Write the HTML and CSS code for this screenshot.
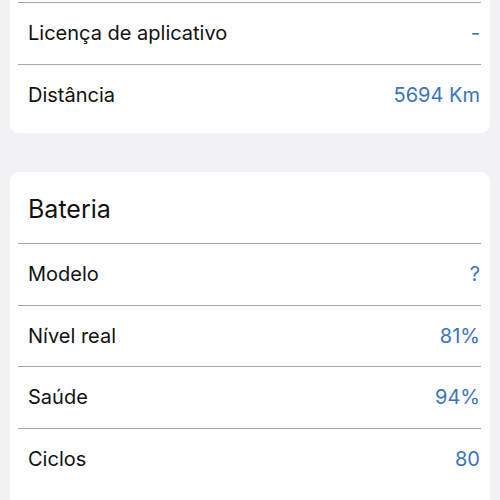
FILE: index.html
```html
<!DOCTYPE html>
<html lang="pt">
<head>
    <meta charset="UTF-8">
    <meta name="viewport" content="width=device-width, initial-scale=1.0">
    <title>Informações</title>
    <link rel="stylesheet" href="styles.css">
</head>
<body>

    <div class="screen">

        <!-- Device card (scrolled, top is cut off) -->
        <div class="card card-top">
            <div class="row">
                <span class="label">Licença de aplicativo</span>
                <span class="value">-</span>
            </div>
            <div class="row">
                <span class="label">Distância</span>
                <span class="value">5694 Km</span>
            </div>
        </div>

        <!-- Battery card -->
        <div class="card card-last">
            <h2 class="card-title">Bateria</h2>
            <div class="row">
                <span class="label">Modelo</span>
                <span class="value">?</span>
            </div>
            <div class="row">
                <span class="label">Nível real</span>
                <span class="value">81%</span>
            </div>
            <div class="row">
                <span class="label">Saúde</span>
                <span class="value">94%</span>
            </div>
            <div class="row">
                <span class="label">Ciclos</span>
                <span class="value">80</span>
            </div>
        </div>

    </div>

</body>
</html>
```

FILE: styles.css
```css
body {
    background-color: #f2f1f6;
    font-family: 'Inter', 'Liberation Sans', sans-serif;
    color: #111;
    margin: 0;
    padding: 0;
}
.screen {
    padding: 0 10px;
}
.card {
    background-color: white;
    border-radius: 9px;
    padding: 0 9px 8px 8px;
    margin-bottom: 39px;
}
.card-top {
    margin-top: -20px;
    padding-top: 22px;
}
.card-last {
    padding-bottom: 30px;
}
.card-title {
    font-size: 25px;
    font-weight: normal;
    margin: 0;
    padding: 0 0 0 10px;
    height: 71px;
    line-height: 74px;
}
.row {
    display: flex;
    justify-content: space-between;
    align-items: center;
    height: 60.5px;
    padding: 0 1px 0 10px;
    border-top: 1px solid #a8a8aa;
    font-size: 20px;
}
.value {
    color: #3a74c0;
}
```
